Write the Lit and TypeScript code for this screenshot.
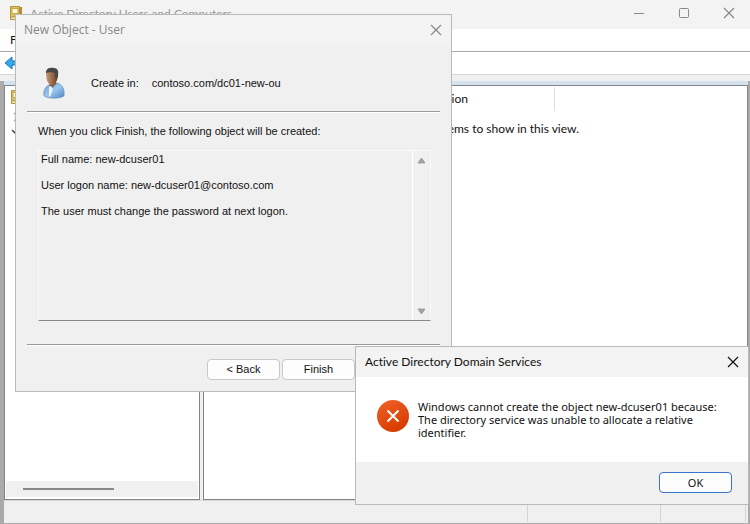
import { LitElement, html, css, svg } from "lit";
import { customElement } from "lit/decorators.js";

const directoryIcon = html`<svg class="dir-icon" viewBox="0 0 14 16" width="14" height="16" aria-hidden="true">
  <path d="M1.500 .5h9v13h-9z" fill="#dfc063" stroke="#b4953c" />
  <path d="M10.500 1h2.500v12h-2.500z" fill="#b08d34" />
  <path d="M3 2.500h6v5H3z" fill="#fffbe0" stroke="#c9a53c" />
  <path d="M1.500 11h11v2.500h-11z" fill="#f5e9b4" stroke="#b4953c" />
</svg>`;

const cross = svg`<path d="M1 1l10 10M11 1L1 11" fill="none" stroke="currentColor" stroke-width="1.2" />`;

const userIcon = html`<svg class="user" viewBox="0 0 24 32" width="24" height="32" role="img" aria-label="User">
  <defs>
    <linearGradient id="coat" x1="0" y1="0" x2="1" y2="1">
      <stop offset="0" stop-color="#6f9fd2" />
      <stop offset=".5" stop-color="#9cc6ef" />
      <stop offset="1" stop-color="#4d83bd" />
    </linearGradient>
    <linearGradient id="skin" x1="0" y1="0" x2="1" y2="0">
      <stop offset="0" stop-color="#c79a78" />
      <stop offset=".5" stop-color="#9c6c4a" />
      <stop offset="1" stop-color="#60402b" />
    </linearGradient>
  </defs>
  <path d="M8 15h6l2 4-7 7-2-7z" fill="#85593c" />
  <path d="M2 29C1 24 3 20 7 18l3 3 5-5c5 1 8 6 7 13-5 3-15 3-20 0z" fill="url(#coat)" stroke="#5c88b8" stroke-width=".6" />
  <path d="M7 20l2-1 2 3-3 8-1-1z" fill="#eef3f9" />
  <path d="M4 6c0-4 10-5 12 0 0 6-2 12-6 12-4 0-6-5-6-12z" fill="url(#skin)" />
  <path d="M4 5C4 1 9 0 12 1c5 0 5 5 3 11l-2-2V6C10 5 7 5 4 6z" fill="#484848" />
</svg>`;

@customElement("app-root")
export class AppRoot extends LitElement {
  static styles = css`
    :host {
      display: block;
      position: relative;
      height: 100vh;
      overflow: hidden;
      background: #f0f0f0;
      color: #111;
      font: 12px/16px Lato, "Open Sans", sans-serif;
      font-variant-ligatures: none;
    }
    * { box-sizing: border-box; }
    button {
      font: inherit;
      color: inherit;
      padding: 0;
      border: 0;
      background: none;
      display: flex;
      align-items: center;
      justify-content: center;
    }
    h1, h2, p { margin: 0; font-size: 12px; font-weight: 400; }
    svg { display: block; flex: none; }

    .window { display: flex; flex-direction: column; height: 100%; border-bottom: 1px solid #aaa; }
    .titlebar {
      display: flex;
      align-items: flex-start;
      height: 29px;
      flex: none;
      padding: 6px 15px 0 9px;
      gap: 7px;
      background: #f3f3f3;
      color: #999;
    }
    .titlebar h1 { flex: 1; }
    .caption { display: flex; gap: 33px; }
    .caption button { width: 12px; height: 14px; color: #888; }
    .menubar { height: 23px; flex: none; background: #fff; border-bottom: 1px solid #aaa; padding: 3px 10px; }
    .toolbar {
      display: flex;
      align-items: center;
      justify-content: space-between;
      height: 23px;
      flex: none;
      padding-left: 4px;
      background: #fff;
      border-bottom: 1px solid #d8d8d8;
    }
    .body { flex: 1; display: flex; flex-direction: column; margin-top: 6px; border: solid #aaa; border-width: 0 2px 0 4px; min-height: 0; }
    .panes { flex: 1; display: flex; gap: 3px; min-height: 0; border-top: 4px solid #d5e2ee; }
    .pane { background: #fff; border: 1px solid #80848b; display: flex; flex-direction: column; }
    .tree { width: 196px; flex: none; justify-content: space-between; padding: 1px; }
    .nodes { display: flex; flex-direction: column; gap: 6px; padding: 3px 4px; }
    .hscroll { height: 16px; margin-bottom: 1px; background: #f0f0f0; padding: 7px 17px; }
    .thumb { width: 91px; height: 2px; background: #888; }
    .list { flex: 1; min-width: 0; padding-top: 1px; }
    .columns { display: flex; height: 24px; line-height: 24px; }
    .column { width: 148px; border-right: 1px solid #e0e0e0; }
    .column.name { width: 203px; }
    .empty { width: 375px; text-align: right; padding-top: 10px; }
    .status { display: flex; justify-content: flex-end; height: 23px; flex: none; padding: 1px 2px; border-top: 1px solid #d8d8d8; }
    .status span { border-right: 1px solid #d4d4d4; }
    .status .message { flex: 1; }
    .status .wide { width: 133px; }
    .status .narrow { width: 85px; }

    .dialog { position: absolute; background: #f0f0f0; border: 1px solid #b9b9b9; display: flex; flex-direction: column; }
    .head { display: flex; justify-content: space-between; align-items: center; background: #f3f3f3; height: 30px; flex: none; padding: 0 9px; }
    .new-object { left: 15px; top: 14px; width: 437px; font: 11px/13px "Liberation Sans", Arial, sans-serif; }
    .new-object .head { color: #888; padding-left: 8px; }
    .new-object h2 { font: 12px/16px "Open Sans", "Noto Sans", sans-serif; }
    .wizard { display: flex; flex-direction: column; padding: 0 11px 10px; }
    .context { display: flex; align-items: center; height: 67px; padding: 10px 15px 0; border-bottom: 1px solid #999; box-shadow: 0 1px #fff; }
    .context .user { margin-right: 25px; }
    .context .path { margin-left: 13px; }
    .summary { padding: 13px 9px 23px 11px; border-bottom: 1px solid #999; box-shadow: 0 1px #fff; }
    .summary label { display: block; margin-bottom: 12px; }
    .result { display: flex; height: 171px; border: 1px solid #fafafa; border-bottom-color: #888; }
    .result textarea {
      flex: 1;
      min-width: 0;
      padding: 2px;
      border: 0;
      border-right: 1px solid #fff;
      resize: none;
      overflow: hidden;
      background: none;
      font: inherit;
      color: inherit;
      outline: 0;
    }
    .vscroll { width: 17px; display: flex; flex-direction: column; justify-content: space-between; padding: 5px 0; color: #a0a0a0; }
    .vscroll button { height: 8px; }
    .actions { display: flex; gap: 2px; padding: 14px 0 1px 180px; }
    .push { width: 73px; height: 21px; border: 1px solid #c8c8c8; border-radius: 4px; background: #fdfdfd; color: #111; }

    .error { left: 355px; top: 346px; right: 1px; }
    .message-row { display: flex; gap: 9px; align-items: flex-start; background: #fff; padding: 23px 21px; }
    .message-row p { font: 11px/13px "Noto Sans", sans-serif; white-space: pre-line; }
    .footer { display: flex; justify-content: flex-end; padding: 10px 16px 11px; }
    .footer .push { border-color: #3a73c8; font: 11px/13px "Noto Sans", sans-serif; }
  `;

  render() {
    return html`
      <main class="window">
        <header class="titlebar">
          ${directoryIcon}
          <h1>Active Directory Users and Computers</h1>
          <div class="caption">
            <button aria-label="Minimize"><svg width="12" height="12"><path d="M1 6.500h10" stroke="currentColor" /></svg></button>
            <button aria-label="Maximize"><svg width="12" height="12"><rect x="1.500" y="1.500" width="9" height="9" rx="1" fill="none" stroke="currentColor" /></svg></button>
            <button aria-label="Close"><svg width="12" height="12">${cross}</svg></button>
          </div>
        </header>
        <nav class="menubar"><button>File</button></nav>
        <div class="toolbar">
          <button aria-label="Back">
            <svg width="18" height="14"><path d="M1 7l7-6v4h9v4H8v4z" fill="#35a8ee" stroke="#1678bd" /></svg>
          </button>
        </div>
        <div class="body">
          <div class="panes">
            <section class="pane tree">
              <div class="nodes">
                ${directoryIcon}
                <svg width="10" height="10"><path d="M4 1l4 4-4 4" fill="none" stroke="#aaa" stroke-width="1.3" /></svg>
                <svg width="10" height="10"><path d="M2 2l4 4 4-4" fill="none" stroke="#444" stroke-width="1.5" /></svg>
              </div>
              <div class="hscroll"><div class="thumb"></div></div>
            </section>
            <section class="pane list">
              <div class="columns">
                <div class="column name"></div>
                <div class="column">Description</div>
              </div>
              <p class="empty">There are no items to show in this view.</p>
            </section>
          </div>
          <footer class="status">
            <span class="message"></span><span class="wide"></span><span class="narrow"></span>
          </footer>
        </div>
      </main>

      <section class="dialog new-object" role="dialog" aria-labelledby="new-title">
        <div class="head">
          <h2 id="new-title">New Object - User</h2>
          <button aria-label="Close"><svg width="12" height="12">${cross}</svg></button>
        </div>
        <div class="wizard">
          <div class="context">${userIcon}<span>Create in:</span><span class="path">contoso.com/dc01-new-ou</span></div>
          <div class="summary">
            <label for="result">When you click Finish, the following object will be created:</label>
            <div class="result">
              <textarea id="result" readonly .value=${"Full name: new-dcuser01\n\nUser logon name: new-dcuser01@contoso.com\n\nThe user must change the password at next logon."}></textarea>
              <div class="vscroll">
                <button aria-label="Scroll up"><svg width="9" height="7"><path d="M4.500 1L8 6H1z" fill="currentColor" stroke="currentColor" stroke-linejoin="round" /></svg></button>
                <button aria-label="Scroll down"><svg width="9" height="7"><path d="M4.500 6L1 1h7z" fill="currentColor" stroke="currentColor" stroke-linejoin="round" /></svg></button>
              </div>
            </div>
          </div>
          <div class="actions">
            <button class="push">&lt; Back</button>
            <button class="push">Finish</button>
          </div>
        </div>
      </section>

      <section class="dialog error" role="alertdialog" aria-labelledby="error-title">
        <div class="head">
          <h2 id="error-title">Active Directory Domain Services</h2>
          <button aria-label="Close"><svg width="12" height="12">${cross}</svg></button>
        </div>
        <div class="message-row">
          <svg width="32" height="32" viewBox="0 0 32 32" role="img" aria-label="Error">
            <defs><linearGradient id="alert" x1="0" y1="0" x2="0.5" y2="1"><stop offset="0" stop-color="#f0632a" /><stop offset="1" stop-color="#d83c00" /></linearGradient></defs>
            <circle cx="16" cy="16" r="16" fill="url(#alert)" />
            <path d="M10.500 10.500l11 11M21.500 10.500l-11 11" stroke="#fff" stroke-width="2" />
          </svg>
          <p>Windows cannot create the object new-dcuser01 because:
The directory service was unable to allocate a relative
identifier.</p>
        </div>
        <div class="footer"><button class="push">OK</button></div>
      </section>
    `;
  }
}
